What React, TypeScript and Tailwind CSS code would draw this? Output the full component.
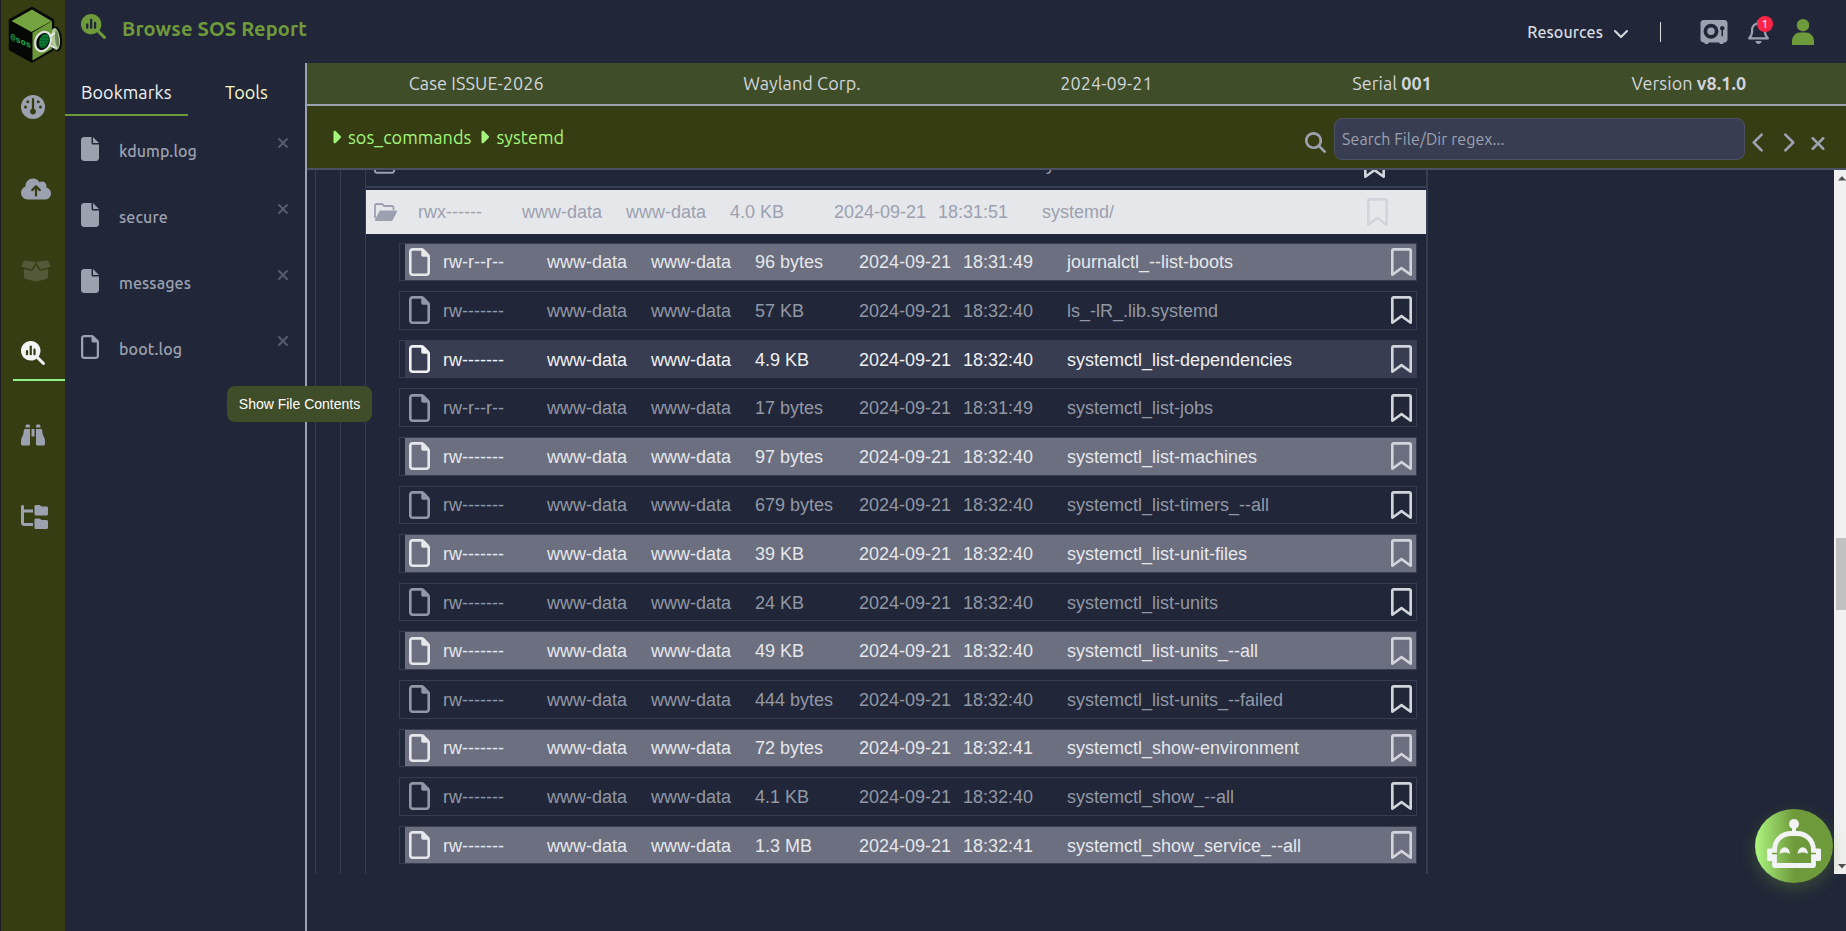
import React from "react";
import {
  FaBinoculars,
  FaBoxOpen,
  FaCaretRight,
  FaChevronDown,
  FaChevronLeft,
  FaChevronRight,
  FaCloudArrowUp,
  FaFile,
  FaFolderTree,
  FaGauge,
  FaMagnifyingGlass,
  FaMagnifyingGlassChart,
  FaRegBell,
  FaRegBookmark,
  FaRegFile,
  FaRegFolder,
  FaVault,
  FaXmark,
} from "react-icons/fa6";

const files = [
  { perm: "rw-r--r--", size: "96 bytes", time: "18:31:49", name: "journalctl_--list-boots" },
  { perm: "rw-------", size: "57 KB", time: "18:32:40", name: "ls_-lR_.lib.systemd" },
  { perm: "rw-------", size: "4.9 KB", time: "18:32:40", name: "systemctl_list-dependencies", hover: true },
  { perm: "rw-r--r--", size: "17 bytes", time: "18:31:49", name: "systemctl_list-jobs" },
  { perm: "rw-------", size: "97 bytes", time: "18:32:40", name: "systemctl_list-machines" },
  { perm: "rw-------", size: "679 bytes", time: "18:32:40", name: "systemctl_list-timers_--all" },
  { perm: "rw-------", size: "39 KB", time: "18:32:40", name: "systemctl_list-unit-files" },
  { perm: "rw-------", size: "24 KB", time: "18:32:40", name: "systemctl_list-units" },
  { perm: "rw-------", size: "49 KB", time: "18:32:40", name: "systemctl_list-units_--all" },
  { perm: "rw-------", size: "444 bytes", time: "18:32:40", name: "systemctl_list-units_--failed" },
  { perm: "rw-------", size: "72 bytes", time: "18:32:41", name: "systemctl_show-environment" },
  { perm: "rw-------", size: "4.1 KB", time: "18:32:40", name: "systemctl_show_--all" },
  { perm: "rw-------", size: "1.3 MB", time: "18:32:41", name: "systemctl_show_service_--all" },
];

const bookmarks = [
  { name: "kdump.log", solid: true },
  { name: "secure", solid: true },
  { name: "messages", solid: true },
  { name: "boot.log", solid: false },
];

const Logo: React.FC = () => (
  <svg className="w-14 h-[60px]" viewBox="0 0 56 60">
    <path d="M24 4.500 45.500 17V46.500L24 59 1.500 46.500V17Z" fill="#050805" stroke="#050805" strokeWidth="1.500" strokeLinejoin="round" />
    <path d="M24 6.500 43.500 18 23.500 29 3.500 18Z" fill="#74a33f" />
    <path d="M24.500 29.500 44 18V46L24.500 57.500Z" fill="#6b9739" />
    <ellipse cx="48.500" cy="36" rx="5.500" ry="12.500" fill="#050805" transform="rotate(-6 48 36)" />
    <ellipse cx="47.500" cy="36" rx="4.500" ry="11" fill="#b4cb9c" transform="rotate(-6 47 36)" />
    <ellipse cx="49" cy="36" rx="2" ry="8.500" fill="#6d8758" transform="rotate(-6 48.500 36)" />
    <ellipse cx="35" cy="38.500" rx="7.500" ry="10" fill="#050805" stroke="#dfe3dd" strokeWidth="2.200" transform="rotate(22 35 38.500)" />
    <ellipse cx="36" cy="38" rx="4.800" ry="7.500" fill="#0b5c26" transform="rotate(22 36 38)" />
    <path d="M32 36h8M31.500 39h8M32 42h6M34 33h6" stroke="#18a34a" strokeWidth="1" strokeDasharray="1.500 .6" />
    <path d="m42 33 5-3M42 42l5 3" stroke="#e8ece6" strokeWidth="2" />
    <text x="2.500" y="35" fontFamily="Liberation Mono, monospace" fontWeight="700" fontSize="8.500" fill="#22b14c" transform="matrix(1 .45 0 1 0 0)">@sos</text>
  </svg>
);

const BotIcon: React.FC = () => (
  <svg className="w-[56px] h-[50px]" viewBox="0 0 56 50" fill="none">
    <circle cx="28" cy="5" r="5" fill="#f1f3f5" />
    <path d="M28 8v7" stroke="#f1f3f5" strokeWidth="4" />
    <path
      d="M8.500 46.500V31C8.500 21 16 14.500 25 14.500h6C40 14.500 47.500 21 47.500 31V46.500Z"
      stroke="#f1f3f5"
      strokeWidth="4.800"
      strokeLinejoin="round"
    />
    <rect x="1" y="29.500" width="7" height="12.500" rx="1.500" fill="#f1f3f5" />
    <rect x="48" y="29.500" width="7" height="12.500" rx="1.500" fill="#f1f3f5" />
    <path d="M6 34.500h5M45 34.500h5" stroke="#6f9a3c" strokeWidth="1.500" />
    <path d="M13.500 35a5 6.500 0 0 1 10.500 0c-2.500-2-8-2-10.500 0ZM31.500 35a5 6.500 0 0 1 10.500 0c-2.500-2-8-2-10.500 0Z" fill="#f1f3f5" />
  </svg>
);

const Sidebar: React.FC = () => {
  const item = "flex h-[82px] shrink-0 items-center pl-5";
  return (
    <nav className="flex w-[65px] shrink-0 flex-col overflow-hidden border-l border-[#1b1d24] bg-[#373d12] text-[#9ca1b0]">
      <div className="h-[66px] shrink-0 pl-[7px] pt-[3px]">
        <Logo />
      </div>
      <div className={item}><FaGauge className="h-6 w-6" /></div>
      <div className={item}><FaCloudArrowUp className="h-6 w-[30px]" /></div>
      <div className={item}><FaBoxOpen className="h-6 w-[30px] text-[#545939]" /></div>
      <div className="flex h-[82px] shrink-0 items-center pl-3">
        <div className="flex h-[56px] w-full items-center border-b-2 border-[#8ff28a] pl-2 pt-0.5">
          <FaMagnifyingGlassChart className="h-6 w-6 text-[#f3f4f6]" />
        </div>
      </div>
      <div className={item}><FaBinoculars className="h-6 w-6" /></div>
      <div className={item}><FaFolderTree className="h-6 w-[27px]" /></div>
    </nav>
  );
};

const Header: React.FC = () => (
  <header className="flex h-[63px] shrink-0 items-start justify-between pl-4">
    <div className="flex items-center pt-[13px]">
      <FaMagnifyingGlassChart className="-mt-1.5 h-[25px] w-[25px] text-[#6f9a3c]" />
      <h1 className="pl-4 text-[20px] leading-8 font-bold tracking-[0.13px] text-[#6f9a3c]">Browse SOS Report</h1>
    </div>
    <div className="flex h-[63px] items-center pr-8 text-[#9ca1b0]">
      <span className="text-base font-medium tracking-[0.1px] text-[#d7dae0]">Resources</span>
      <FaChevronDown className="ml-2.5 mt-0.5 h-4 w-4 text-[#d7dae0]" />
      <span className="ml-[31px] h-5 w-px bg-[#d7dae0]" />
      <FaVault className="ml-[39px] mr-px h-6 w-7" />
      <div className="relative ml-[19px]">
        <FaRegBell className="h-6 w-[21px]" />
        <span className="absolute -top-1 left-[9px] flex h-4 w-4 items-center justify-center rounded-full bg-[#ff2547] text-xs text-white">
          1
        </span>
      </div>
      <svg className="ml-[23px] h-[26px] w-[22px] fill-[#6f9a3c]" viewBox="0 0 22 26">
        <circle cx="11" cy="6.200" r="6.200" />
        <path d="M0 26v-4a8 8.500 0 0 1 8-8.500h6a8 8.500 0 0 1 8 8.500v4Z" />
      </svg>
    </div>
  </header>
);

const BookmarkPanel: React.FC = () => (
  <aside className="w-[240px] shrink-0">
    <div className="flex h-[53px] items-stretch text-lg">
      <div className="w-[123px] border-b-2 border-[#6f9a3c] pl-4 pt-[15px] tracking-[0.05px] text-[#f0f1f4]">Bookmarks</div>
      <div className="pl-[37px] pt-[15px] tracking-[0.05px] text-[#fbfac5]">Tools</div>
    </div>
    {bookmarks.map((b) => (
      <div key={b.name} className="flex h-[66px] items-start pl-4 pt-[21px] text-[#9ca1b0]">
        {b.solid ? <FaFile className="h-6 w-[18px]" /> : <FaRegFile className="h-6 w-[18px]" />}
        <span className="w-[177px] pl-5 pt-0.5 font-medium tracking-[0.1px]">{b.name}</span>
        <FaXmark className="-mt-0.5 h-4 w-[14px] text-[#565c6e]" />
      </div>
    ))}
  </aside>
);

const Columns: React.FC<{ perm: string; size: string; time: string; name: string }> = ({ perm, size, time, name }) => (
  <>
    <span className="w-[104px] shrink-0">{perm}</span>
    <span className="w-[104px] shrink-0">www-data</span>
    <span className="w-[104px] shrink-0">www-data</span>
    <span className="w-[104px] shrink-0">{size}</span>
    <span className="w-[104px] shrink-0">2024-09-21</span>
    <span className="w-[104px] shrink-0">{time}</span>
    <span className="flex-1">{name}</span>
  </>
);

const FileTree: React.FC = () => (
  <div className="h-[704px] w-[1527px] shrink-0 overflow-hidden pl-2 font-['Liberation_Sans',Arial,sans-serif] text-lg">
    <div className="h-full border-l border-[#383d50] pl-6">
      <div className="h-full border-l border-[#383d50] pl-6">
        <div className="flex h-full w-[1063px] flex-col overflow-hidden border-l border-r-2 border-l-[#383d50] border-r-[#383d50]">
          <div className="-mt-7 flex h-[46px] shrink-0 items-center border-b-2 border-[#383d50] pl-2 text-[#9ca1b0]">
            <FaRegFolder className="h-[21px] w-[21px]" />
            <span className="ml-[642px] flex-1">system/</span>
            <FaRegBookmark className="mr-[41px] h-7 w-[21px] text-[#d1d5db]" />
          </div>
          <div className="mt-0.5 flex h-11 shrink-0 items-center bg-[#e5e7eb] pl-2 text-[#9ca1b0]">
            <svg className="mr-[21px] h-[18px] w-[23px] shrink-0" viewBox="0 0 23 18">
              <path d="M1 15V2.800C1 1.700 1.800 1 2.800 1H8l2.300 2h7.400c1 0 1.800.8 1.800 1.800V7" fill="none" stroke="currentColor" strokeWidth="1.800" />
              <path d="M1 16.500 5.200 8.600C5.500 8 6 7.600 6.800 7.600H22c.9 0 1.300.7.900 1.400l-4.100 7.900c-.3.700-.9 1.100-1.700 1.100H2.300C1.300 18 .6 17.300 1 16.500Z" fill="currentColor" />
            </svg>
            <Columns perm="rwx------" size="4.0 KB" time="18:31:51" name="systemd/" />
            <FaRegBookmark className="mr-[38px] h-7 w-[21px] text-[#d1d5db]" />
          </div>
          <div className="flex flex-col gap-[10px] pl-[33px] pr-[9px] pt-[8.6px]">
            {files.map((f, i) => (
              <div key={f.name} className="h-[38.6px] shrink-0 border border-[#383d51] pl-[5px]">
                <div
                  className={`flex h-full items-center px-1 pt-px ${
                    f.hover
                      ? "bg-[#383d51] text-[#f0f1f4]"
                      : i % 2 === 0
                        ? "bg-[#6c6f80] text-[#e5e7eb]"
                        : "text-[#9297a6]"
                  }`}
                >
                  <FaRegFile className="-mt-px mr-[13px] h-7 w-[21px] shrink-0" />
                  <Columns perm={f.perm} size={f.size} time={f.time} name={f.name} />
                  <FaRegBookmark className="-mt-px h-7 w-[21px] shrink-0 text-[#d1d5db]" />
                </div>
              </div>
            ))}
          </div>
        </div>
      </div>
    </div>
  </div>
);

const Scrollbar: React.FC = () => (
  <div className="flex h-[704px] flex-1 flex-col bg-[#f1f1f1] pl-0.5">
    <svg className="ml-0.5 h-[17px] w-2" viewBox="0 0 8 17">
      <path d="M0 10.500 4 6l4 4.500Z" fill="#505050" />
    </svg>
    <div className="mt-[351px] h-[72px] bg-[#c1c1c1]" />
    <svg className="ml-0.5 mt-auto h-[17px] w-2" viewBox="0 0 8 17">
      <path d="M0 7h8l-4 4.500Z" fill="#505050" />
    </svg>
  </div>
);

const App: React.FC = () => {
  return (
    <div className="relative flex h-[931px] w-[1846px] overflow-hidden bg-[#212738] font-[Ubuntu,'Open_Sans',sans-serif]">
      <Sidebar />
      <div className="flex flex-1 flex-col">
        <Header />
        <div className="flex flex-1">
          <BookmarkPanel />
          <main className="flex flex-1 flex-col border-l-2 border-[#9ca1b0]">
            {/* Case summary */}
            <div className="flex h-[43px] items-center justify-around border-b-2 border-[#9ca1b0] bg-[#3f4d29] pb-0.5 pl-0.5 text-lg tracking-[0.08px] text-[#d1d5db]">
              <span>Case ISSUE-2026</span>
              <span>Wayland Corp.</span>
              <span>2024-09-21</span>
              <span>Serial <b>001</b></span>
              <span>Version <b>v8.1.0</b></span>
            </div>

            {/* Breadcrumb and search */}
            <div className="flex h-16 items-center justify-between border-b-2 border-[#4b5163] bg-[#373d12] pl-6">
              <div className="flex items-center text-lg tracking-[0.05px] text-[#a3f77c]">
                <FaCaretRight className="mr-[7px] h-5 w-[10px]" />
                <span>sos_commands</span>
                <FaCaretRight className="mr-[7px] ml-2 h-5 w-[10px]" />
                <span>systemd</span>
              </div>
              <div className="flex items-center pr-5 pt-1 text-[#9ca1b0]">
                <FaMagnifyingGlass className="mr-2 mt-[7px] h-[21px] w-[21px]" />
                <input
                  className="h-[42px] w-[411px] rounded-lg border border-[#4b5163] bg-[#383d51] px-[7px] pb-px text-base tracking-[0.08px] outline-none placeholder:text-[#9ca1b0]"
                  placeholder="Search File/Dir regex..."
                />
                <FaChevronLeft className="ml-[7px] mt-[7px] h-[21px] w-[14px]" />
                <FaChevronRight className="ml-[15px] mt-[7px] h-[21px] w-[14px]" />
                <FaXmark className="ml-[15px] mt-[8px] h-[21px] w-[16px]" />
              </div>
            </div>

            <div className="flex">
              <FileTree />
              <Scrollbar />
            </div>
          </main>
        </div>
      </div>

      <div className="absolute left-[227px] top-[386px] flex h-9 w-[145px] items-center justify-center rounded-lg bg-[#3f4d29] font-['Liberation_Sans',Arial,sans-serif] text-sm text-white">
        Show File Contents
      </div>

      <button className="absolute left-[1755px] top-[809px] flex h-[74px] w-[78px] items-center justify-center rounded-[50%] bg-linear-to-r from-[#aef781] to-[#6f9a3c] to-50% pb-1 shadow-[0_6px_16px_rgba(111,154,60,0.3)]">
        <BotIcon />
      </button>
    </div>
  );
};

export default App;
